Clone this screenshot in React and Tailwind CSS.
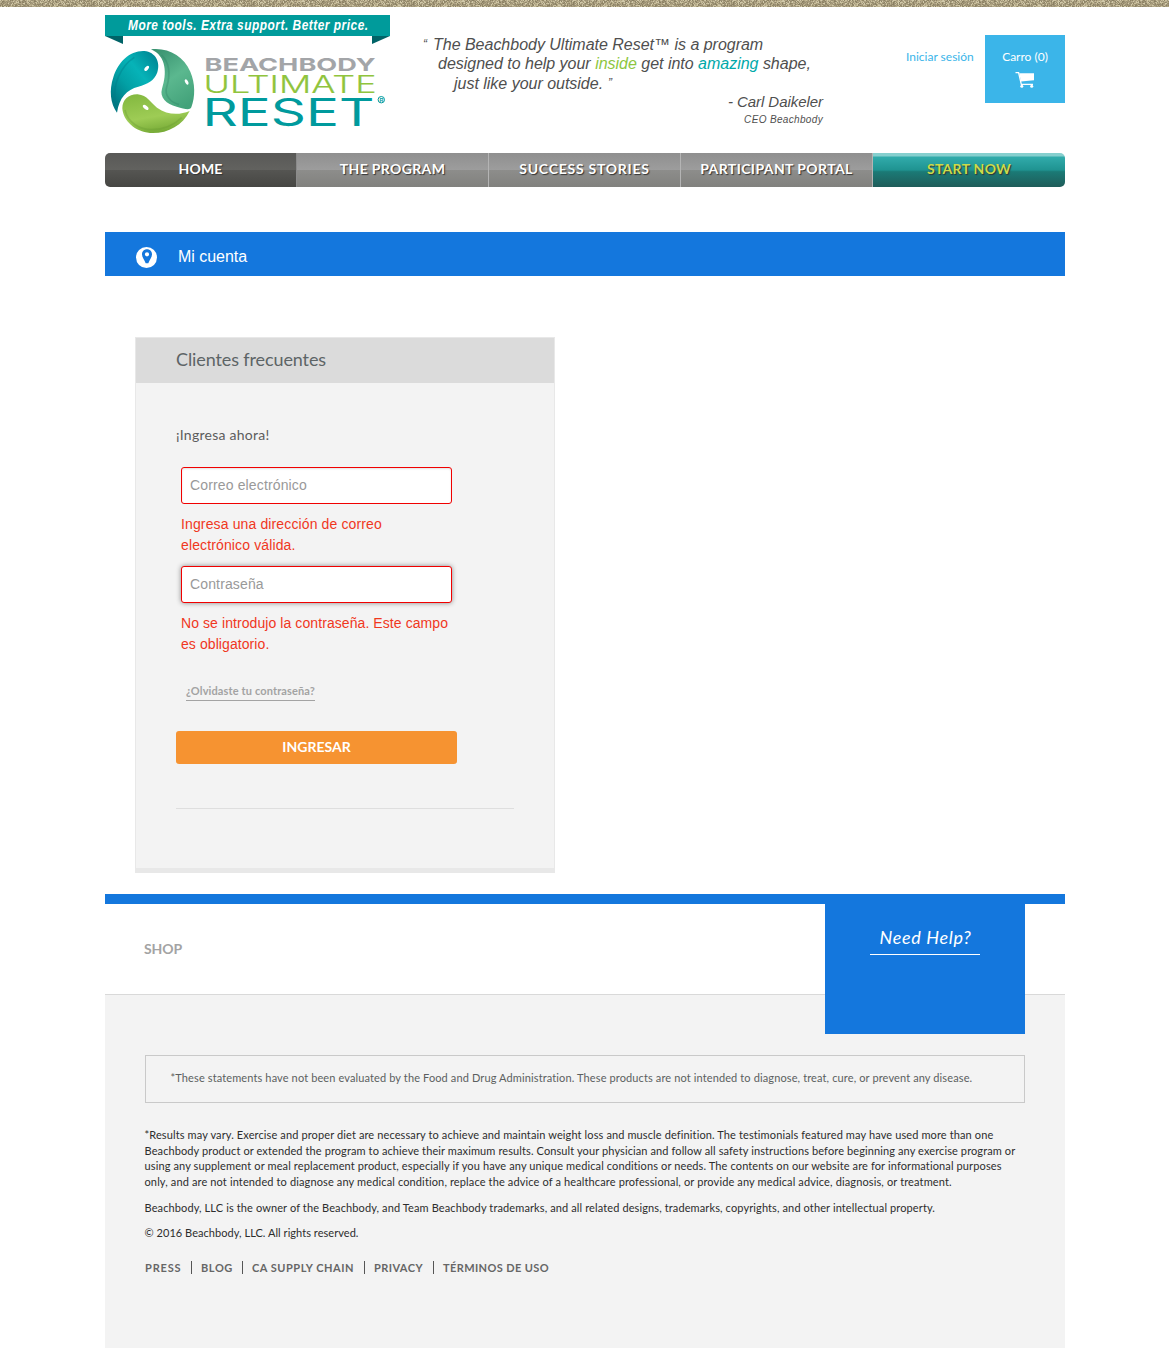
const WEAVE = ["#978d70", "#b3a784", "#cfc4a2", "#857b5e", "#a5997a", "#c2b795", "#9b9175", "#d9d0b2", "#8d8263", "#b0a588"];

function weaveThreads() {
  const threads = [];
  let seed = 7;
  for (let y = 0; y < 7; y += 1) {
    for (let x = 0; x < 160; x += 1) {
      seed = (seed * 16807) % 2147483647;
      threads.push({ x, y, color: WEAVE[Math.floor(seed / 1000) % WEAVE.length] });
    }
  }
  return threads;
}

function BurlapStrip() {
  return (
    <svg className="block h-[7px] w-full" aria-hidden="true">
      <defs>
        <pattern id="weave" width="160" height="7" patternUnits="userSpaceOnUse">
          <rect width="160" height="7" fill="#a89d80" />
          {weaveThreads().map((t) => (
            <rect key={`${t.x}-${t.y}`} x={t.x} y={t.y} width="1.02" height="1.02" fill={t.color} opacity="0.85" />
          ))}
        </pattern>
      </defs>
      <rect width="100%" height="7" fill="url(#weave)" />
    </svg>
  );
}

function Logo() {
  return (
    <svg className="block h-[122px] w-[285px] shrink-0" viewBox="0 0 285 122">
      <defs>
        <linearGradient id="teal" x1="0.9" y1="0.1" x2="0.15" y2="0.9">
          <stop offset="0" stopColor="#008c98" />
          <stop offset="0.35" stopColor="#06b3b8" />
          <stop offset="0.65" stopColor="#02a0a5" />
          <stop offset="1" stopColor="#007883" />
        </linearGradient>
        <linearGradient id="jade" x1="0.2" y1="0" x2="0.7" y2="1">
          <stop offset="0" stopColor="#3a9371" />
          <stop offset="0.5" stopColor="#5bb88f" />
          <stop offset="1" stopColor="#43a27a" />
        </linearGradient>
        <linearGradient id="lime" x1="0.2" y1="0" x2="0.5" y2="1">
          <stop offset="0" stopColor="#84b940" />
          <stop offset="0.6" stopColor="#9ecc55" />
          <stop offset="1" stopColor="#76aa36" />
        </linearGradient>
      </defs>
      <path d="M0 0H285V21H0Z" fill="#009b9b" />
      <path d="M0 21H18V29Z M285 21H267V29Z" fill="#006367" />
      <text x="27.060" y="15.300" transform="scale(0.85 1)" textLength="282.500" lengthAdjust="spacing" fill="#fff" className="font-['Liberation_Sans'] text-[14px] font-bold italic">More tools. Extra support. Better price.</text>
      <g transform="scale(0.33333) translate(-30 -45)">
        <path d="M66 338C46 312 42 270 55 232C70 185 105 151 148 153C182 156 197 187 187 217C178 243 157 253 130 260C95 269 73 292 66 338Z" fill="url(#teal)" />
        <path d="M60 300C54 255 75 200 118 172" fill="none" stroke="#007b86" strokeWidth="5" opacity=".4" />
        <ellipse cx="155" cy="205" rx="9" ry="5" transform="rotate(-50 155 205)" fill="#fff" />
        <path d="M168 148C220 142 265 168 286 215C301 250 301 290 289 322C283 333 268 326 245 320C214 312 193 292 201 266C216 222 215 168 168 148Z" fill="url(#jade)" />
        <path d="M200 165C225 190 226 225 215 262C208 285 225 306 252 314" fill="none" stroke="#2d8263" strokeWidth="5" opacity=".35" />
        <ellipse cx="275" cy="246" rx="9" ry="4.500" transform="rotate(60 275 246)" fill="#fff" />
        <path d="M284 333C262 378 215 402 165 399C121 396 84 362 82 325C82 298 102 282 128 283C158 286 166 308 186 323C217 345 252 346 284 333Z" fill="url(#lime)" />
        <path d="M90 330C98 368 135 390 172 389C208 388 238 375 260 353" fill="none" stroke="#679a31" strokeWidth="5" opacity=".35" />
        <ellipse cx="152" cy="322" rx="10" ry="5" transform="rotate(38 152 322)" fill="#fff" />
      </g>
      <text x="99.500" y="56" textLength="171" lengthAdjust="spacingAndGlyphs" fill="#a3a5a8" className="font-['Inter'] text-[18px] font-bold">BEACHBODY</text>
      <text x="98.500" y="78" textLength="173" lengthAdjust="spacingAndGlyphs" fill="#90c43d" stroke="#90c43d" strokeWidth="0.150" className="font-['Inter'] text-[24.5px] font-light">ULTIMATE</text>
      <text x="97.500" y="110.700" textLength="172" lengthAdjust="spacingAndGlyphs" fill="#009a9d" className="font-['Inter'] text-[37.5px]">RESET</text>
      <circle cx="276.300" cy="84.700" r="3.200" fill="none" stroke="#009a9d" strokeWidth="1" />
      <text x="274.500" y="86.800" fill="#009a9d" className="font-['Liberation_Sans'] text-[5.5px] font-bold">R</text>
    </svg>
  );
}

function Quote() {
  return (
    <div className="ml-[33px] mt-5 w-[400px] shrink-0 whitespace-nowrap font-['Liberation_Sans',sans-serif] text-base italic leading-[19px] tracking-[-0.015px] text-[#4f4f4f]">
      <p className="flex"><span className="w-[10px] text-[12px] leading-[19px]">“</span>The Beachbody Ultimate Reset™ is a program</p>
      <p className="h-5 pl-[15px]">
        designed to help your <span className="text-[#8dc63f]">inside</span> get into <span className="text-[#00a9a9]">amazing</span> shape,
      </p>
      <p className="flex pl-[31px]">just like your outside.<span className="pl-[5px] text-[12px] leading-[19px]">”</span></p>
      <p className="text-right text-[15px] leading-[17px] tracking-[-0.05px]">- Carl Daikeler</p>
      <p className="mt-0.5 text-right text-[10px] leading-[15px] tracking-[0.34px]">CEO Beachbody</p>
    </div>
  );
}

function CartIcon() {
  return (
    <svg className="mt-[7px] h-4 w-5" viewBox="0 0 20 16">
      <path d="M0.500 0.700H3.600L6.300 12.300H18" fill="none" stroke="#fff" strokeWidth="1.300" />
      <path d="M4.300 1.300H19V8.200L6 9.600Z" fill="#fff" />
      <circle cx="6.800" cy="14.200" r="1.500" fill="#fff" />
      <circle cx="16.700" cy="14.200" r="1.500" fill="#fff" />
    </svg>
  );
}

function Header() {
  return (
    <header className="flex h-[146px] pt-2">
      <Logo />
      <Quote />
      <a className="ml-[83px] mt-[34px] w-[69px] shrink-0 whitespace-nowrap text-xs leading-4 text-[#3bb5e9]">Iniciar sesión</a>
      <div className="ml-[10px] mt-5 flex h-[68px] w-20 shrink-0 flex-col items-center bg-[#3bb5e9] pt-[14px] text-white">
        <span className="text-xs leading-4">Carro (0)</span>
        <CartIcon />
      </div>
    </header>
  );
}

const GRAY = "border-r border-[#b4b4b4] bg-[linear-gradient(#8f8f8f,#9d9d9d_50%,#8d8d8b_50%,#81817e)] text-white";
const NAV = [
  { label: "HOME", style: "border-r border-[#8b8b8b] bg-[linear-gradient(#595957,#62625f_50%,#555552_50%,#464643)] text-white tracking-[0.15px]" },
  { label: "THE PROGRAM", style: `${GRAY} tracking-[0.36px]` },
  { label: "SUCCESS STORIES", style: `${GRAY} tracking-[0.76px]` },
  { label: "PARTICIPANT PORTAL", style: `${GRAY} tracking-[0.4px]` },
  { label: "START NOW", style: "bg-[linear-gradient(#86cfce_0px,#86cfce_3px,#31abab_4px,#1f9391_50%,#1b7a76_55%,#1f5c59)] text-[#cbdb4c] tracking-[0.28px]" },
];

function Nav() {
  return (
    <nav className="flex h-[34px] overflow-hidden rounded-[5px]">
      {NAV.map((item) => (
        <a key={item.label} className={`flex w-48 items-center justify-center whitespace-nowrap pb-[3px] text-sm font-bold [text-shadow:1px_1px_1px_#333] ${item.style}`}>
          {item.label}
        </a>
      ))}
    </nav>
  );
}

function TitleBar() {
  return (
    <div className="mt-[45px] flex h-11 items-center bg-[#1477dd] pl-[31px] pt-1.5">
      <svg viewBox="0 0 21 21" className="h-[21px] w-[21px]">
        <circle cx="10.500" cy="10.500" r="10.500" fill="#fff" />
        <path fillRule="evenodd" d="M11 2.200C8 2.200 6 4.400 6 7.200C6 10.300 8.300 12.500 9.700 16.200H12.300C13.700 12.500 16 10.300 16 7.200C16 4.400 14 2.200 11 2.200ZM11 5.200A2.100 2.100 0 1 1 11 9.400A2.100 2.100 0 1 1 11 5.200Z" fill="#1477dd" />
      </svg>
      <h1 className="ml-[21px] pb-px font-['Liberation_Sans',sans-serif] text-base leading-5 tracking-[-0.04px] text-white">Mi cuenta</h1>
    </div>
  );
}

const FIELD = "block h-[37px] w-[271px] rounded-[3px] border border-[#f00000] bg-white px-2 pb-0.5 text-sm tracking-[0.14px] outline-none placeholder:text-[#999]";

function LoginCard() {
  return (
    <section className="ml-[30px] mt-[61px] h-[536px] w-[420px] border border-b-[5px] border-[#e8e8e8] bg-[#f3f3f3]">
      <h2 className="h-[45px] bg-[#dbdbdb] pl-10 text-lg leading-[43px] tracking-[-0.11px] text-[#5d6466]">Clientes frecuentes</h2>
      <div className="px-10 pt-[42px]">
        <p className="text-sm leading-5 tracking-[0.25px] text-[#5c5c5c]">¡Ingresa ahora!</p>
        <div className="ml-[5px] mt-[22px] whitespace-nowrap font-['Liberation_Sans',sans-serif] text-sm leading-[21px] text-[#f0371d]">
          <input className={`${FIELD} shadow-[inset_0_1px_2px_rgba(0,0,0,0.12)]`} placeholder="Correo electrónico" />
          <p className="mt-[10px] tracking-[0.13px]">Ingresa una dirección de correo<br />electrónico válida.</p>
          <input className={`${FIELD} mt-[10px] shadow-[0_0_5px_rgba(0,0,0,0.45)]`} placeholder="Contraseña" type="password" />
          <p className="mt-[10px] tracking-[0.08px]">No se introdujo la contraseña. Este campo<br />es obligatorio.</p>
        </div>
        <a className="ml-[10px] mt-7 block h-[18px] w-[129px] whitespace-nowrap border-b border-[#a3a3a3] text-[11px] font-bold leading-4 tracking-[0.13px] text-[#a3a3a3]">¿Olvidaste tu contraseña?</a>
        <button className="mt-[30px] block h-[33px] w-[281px] rounded-[3px] bg-[#f69331] pb-0.5 text-sm font-bold text-white">INGRESAR</button>
        <hr className="mt-11 border-[#dedede]" />
      </div>
    </section>
  );
}

const LINKS = [
  { label: "PRESS", style: "w-[46px] tracking-[0.84px]" },
  { label: "BLOG", style: "w-[41px] tracking-[0.6px]" },
  { label: "CA SUPPLY CHAIN", style: "w-[112px] tracking-[0.52px]" },
  { label: "PRIVACY", style: "w-[59px] tracking-[0.43px]" },
  { label: "TÉRMINOS DE USO", style: "tracking-[0.39px]" },
];

function Footer() {
  return (
    <footer className="relative mt-[21px] border-t-[10px] border-[#1477dd]">
      <div className="flex h-[90px] pl-[39px] pt-9">
        <span className="text-sm font-bold leading-[18px] tracking-[-0.11px] text-[#a3a3a3]">SHOP</span>
      </div>
      <div className="absolute right-10 top-0 flex h-[130px] w-[200px] justify-center bg-[#1477dd] pt-[23px]">
        <span className="h-7 w-[110px] whitespace-nowrap border-b border-white pl-px text-center text-lg italic leading-[21px] tracking-[0.68px] text-white">Need Help?</span>
      </div>
      <div className="h-[354px] whitespace-nowrap border-t border-[#d9d9d9] bg-[#f3f3f3] px-10 pt-[60px] text-[11px] text-[#2d2d2d]">
        <p className="h-12 border border-[#c9c9c9] pl-[24.5px] leading-[44px] tracking-[0.122px] text-[#5b5f60]">*These statements have not been evaluated by the Food and Drug Administration. These products are not intended to diagnose, treat, cure, or prevent any disease.</p>
        <div className="-ml-[0.5px] mt-6 leading-[15.7px]">
          <p className="tracking-[0.118px]">*Results may vary. Exercise and proper diet are necessary to achieve and maintain weight loss and muscle definition. The testimonials featured may have used more than one</p>
          <p className="tracking-[0.107px]">Beachbody product or extended the program to achieve their maximum results. Consult your physician and follow all safety instructions before beginning any exercise program or</p>
          <p className="tracking-[0.123px]">using any supplement or meal replacement product, especially if you have any unique medical conditions or needs. The contents on our website are for informational purposes</p>
          <p className="tracking-[0.131px]">only, and are not intended to diagnose any medical condition, replace the advice of a healthcare professional, or provide any medical advice, diagnosis, or treatment.</p>
        </div>
        <p className="-ml-[0.5px] mt-[10px] leading-4 tracking-[0.116px]">Beachbody, LLC is the owner of the Beachbody, and Team Beachbody trademarks, and all related designs, trademarks, copyrights, and other intellectual property.</p>
        <p className="-ml-[0.5px] mt-[9px] leading-4 tracking-[0.045px]">© 2016 Beachbody, LLC. All rights reserved.</p>
        <div className="mt-5 flex gap-[9px] font-bold leading-[13px] text-[#666]">
          {LINKS.map((link, i) => (
            <a key={link.label} className={`box-content ${i < LINKS.length - 1 ? "border-r border-[#555]" : ""} ${link.style}`}>{link.label}</a>
          ))}
        </div>
      </div>
    </footer>
  );
}

export default function App() {
  return (
    <div className="h-[1348px] overflow-hidden bg-white font-['Lato',sans-serif]">
      <BurlapStrip />
      <div className="ml-[105px] w-[960px]">
        <Header />
        <Nav />
        <TitleBar />
        <LoginCard />
        <Footer />
      </div>
    </div>
  );
}
